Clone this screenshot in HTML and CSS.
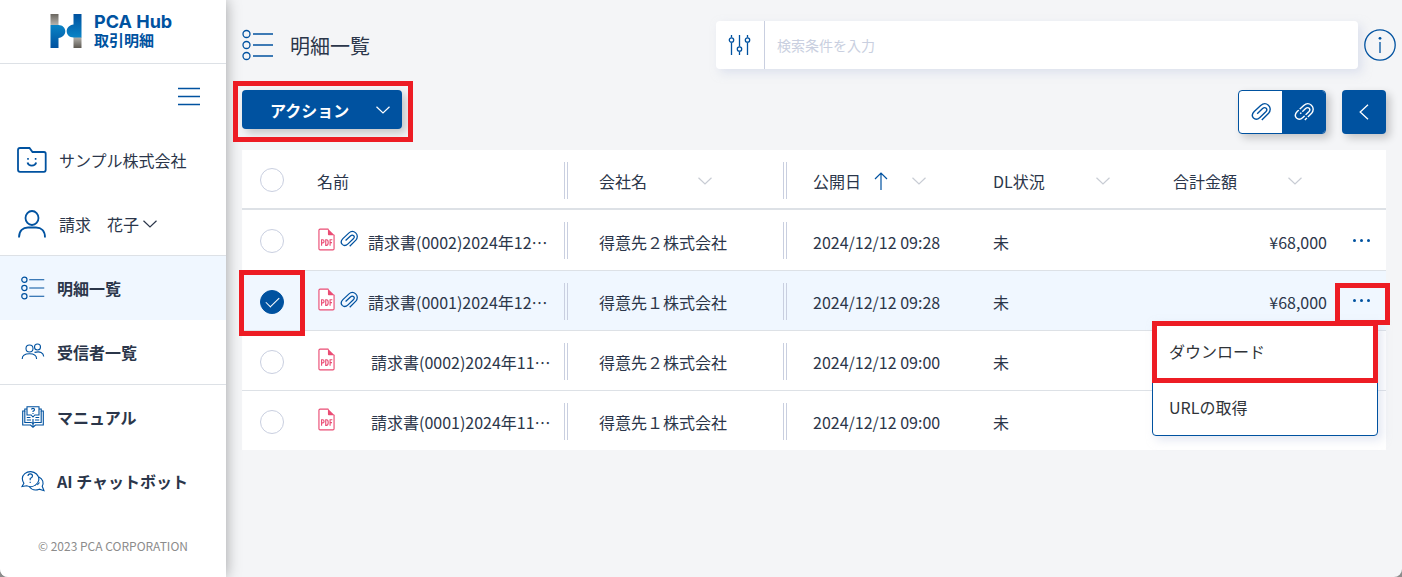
FILE: index.html
```html
<!DOCTYPE html>
<html lang="ja">
<head>
    <meta charset="UTF-8">
    <meta name="viewport" content="width=device-width, initial-scale=1.0">
    <title>明細一覧</title>
    <link rel="stylesheet" href="styles.css">
</head>
<body>
    <!-- Shared icons -->
    <svg class="sprite" width="0" height="0">
        <symbol id="icon-chevron" viewBox="0 0 14 8"><path d="M0.5 0.8L7 7L13.5 0.8"/></symbol>
        <symbol id="icon-list" viewBox="0 0 32 32">
            <circle cx="4.5" cy="5" r="3.5"/><circle cx="4.5" cy="16" r="3.5"/><circle cx="4.5" cy="27" r="3.5"/>
            <path d="M11 5h20M11 16h20M11 27h20"/>
        </symbol>
        <symbol id="icon-clip" viewBox="0 0 20 20">
            <path d="M10.8 18L17.6 11.2C19.8 8.8 19.7 5.2 17.4 3.2C15.1 1.2 12 1.4 9.7 3.5L3.2 9.6C1.2 11.6 0.8 14.2 2.5 16C4.3 17.7 6.9 17.3 8.9 15.4L14.8 9.8C16 8.5 16.1 7.2 15.2 6.3C14.2 5.4 12.8 5.5 11.6 6.6L6.2 11.7"/>
        </symbol>
        <symbol id="icon-pdf" viewBox="0 0 18 24">
            <path d="M11 1H2.2Q1 1 1 2.2V21.8Q1 23 2.2 23H15.8Q17 23 17 21.8V7" fill="#fff"/>
            <path d="M10.5 0.5L17.5 7.5H11.5Q10.5 7.5 10.5 6.5Z" fill="#ea4c74" stroke="none"/>
            <path d="M3.8 18.5V12.3H5Q6.4 12.3 6.4 14Q6.4 15.6 5 15.6H3.8M8.2 12.3V18.2H9Q10.8 18.2 10.8 15.2Q10.8 12.3 9 12.3ZM12.8 18.5V12.3H15.2M12.8 15.3H14.8"/>
        </symbol>
    </svg>

    <div class="app">
        <aside class="sidebar">
            <div class="brand">
                <svg width="32" height="34" viewBox="0 0 32 34">
                    <defs>
                        <linearGradient id="gray" x1="0" y1="0" x2="0" y2="1"><stop offset="0" stop-color="#6a665f"/><stop offset="1" stop-color="#b5b3ae"/></linearGradient>
                        <linearGradient id="gray2" x1="0" y1="1" x2="0" y2="0"><stop offset="0" stop-color="#5d5952"/><stop offset="1" stop-color="#b5b3ae"/></linearGradient>
                        <linearGradient id="blue" x1="0" y1="0" x2="0" y2="1"><stop offset="0" stop-color="#0a84c6"/><stop offset="1" stop-color="#00519f"/></linearGradient>
                        <linearGradient id="blue2" x1="0" y1="1" x2="0" y2="0"><stop offset="0" stop-color="#0a84c6"/><stop offset="1" stop-color="#00519f"/></linearGradient>
                    </defs>
                    <path d="M0.5 0h8v11h-8z" fill="url(#gray)"/>
                    <path d="M23.5 23h8v11h-8z" fill="url(#gray2)"/>
                    <path d="M0.5 11H8.5C12.5 11 15.3 14 15.3 17.3C15.3 20.8 12.5 23.5 8.5 24V34H0.5Z" fill="url(#blue)"/>
                    <path d="M31.5 23.5H23.5C19.5 23.5 16.7 20.8 16.7 17.3C16.7 13.8 19.5 11 23.5 10.5V0H31.5Z" fill="url(#blue2)"/>
                </svg>
                <div class="brand-text">
                    <span class="brand-name">PCA Hub</span>
                    <span class="brand-sub">取引明細</span>
                </div>
            </div>

            <div class="menu-toggle">
                <button type="button" class="icon-button" aria-label="メニュー">
                    <svg class="line-icon" width="22" height="20" viewBox="0 0 22 20"><path d="M0 2.5h22M0 10.5h22M0 18.5h22"/></svg>
                </button>
            </div>

            <div class="account">
                <svg class="line-icon bold" width="30" height="26" viewBox="0 0 30 26">
                    <path d="M3 1H12.5L15.5 5H27Q28.7 5 28.7 6.7V22.8Q28.7 24.8 27 24.8H3Q1 24.8 1 22.8V3Q1 1 3 1Z"/>
                    <path d="M10.5 15.5Q11.5 18.7 14.8 18.7Q18.2 18.7 19.2 15.5"/>
                    <path d="M10.2 11.8h1.6M17.8 11.8h1.6"/>
                </svg>
                <span>サンプル株式会社</span>
            </div>
            <button type="button" class="account account-user">
                <svg class="line-icon bold" width="30" height="28" viewBox="0 0 30 28">
                    <ellipse cx="15" cy="8" rx="6.5" ry="7"/>
                    <path d="M2 27.5C2 20.5 6 17.5 11 17.5H19C24 17.5 28 20.5 28 27.5"/>
                </svg>
                <span>請求　花子</span>
                <svg class="chevron dark" width="14" height="8"><use href="#icon-chevron"/></svg>
            </button>

            <nav class="nav">
                <a href="#" class="nav-item active">
                    <svg class="line-icon list-small" width="24" height="24"><use href="#icon-list"/></svg>
                    <span>明細一覧</span>
                </a>
                <a href="#" class="nav-item">
                    <svg class="line-icon thin" width="24" height="24" viewBox="0 0 24 24">
                        <circle cx="8.5" cy="8.5" r="3.5"/><circle cx="16.5" cy="7" r="3"/>
                        <path d="M1.2 19C1.2 15 4 13.8 8.5 13.8C13 13.8 15.6 15 15.6 19"/>
                        <path d="M13.5 12.4C19 11 22.5 12.5 22.7 16.5"/>
                    </svg>
                    <span>受信者一覧</span>
                </a>
            </nav>
            <nav class="nav">
                <a href="#" class="nav-item">
                    <svg class="line-icon thin" width="24" height="24" viewBox="0 0 24 24">
                        <path d="M6 1.7H18V10H13.8L12 12L10.2 10H6Z"/>
                        <path d="M6 4H3.8V6H1.7V20H9.5L12 22.2L14.5 20H22.3V6H20.2V4H18"/>
                        <path d="M3.8 6V17.5H9.5Q12 17.5 12 19.5Q12 17.5 14.5 17.5H20.2V6M12 14V22"/>
                        <path d="M5.8 12.5H9.5M5.8 15H10M14.5 12.5H18.2M14 15H18.2"/>
                        <path d="M10.5 4.6Q10.5 3.4 12 3.4Q13.5 3.4 13.5 4.7Q13.5 5.7 12 6.2V7M12 8V9"/>
                    </svg>
                    <span>マニュアル</span>
                </a>
                <a href="#" class="nav-item">
                    <svg class="line-icon thin" width="24" height="24" viewBox="0 0 24 24">
                        <path d="M1 17.5L2.9 14.2C0.8 10.8 1 7 3.8 4.6C7.3 1.7 12.5 2 15.5 5C18 7.5 18.4 11 16.7 13.8C14.3 17.3 9.8 18.5 5.6 16.8Z"/>
                        <path d="M18 8C22 10 23 14 21.2 17.3L23 21.7L18.3 20.2C14.5 21.7 10.5 20.7 8.4 17.8"/>
                        <path d="M7 7Q7 4.9 9.2 4.9Q11.5 4.9 11.5 7Q11.5 8.5 9.2 9.4V11.3M9.2 12.8V14"/>
                        <path d="M13.5 16.5H14.5M16.3 16L18.5 13.5"/>
                    </svg>
                    <span>AI チャットボット</span>
                </a>
            </nav>
            <footer class="copyright">© 2023 PCA CORPORATION</footer>
        </aside>

        <main class="main">
            <header class="page-header">
                <svg class="line-icon" width="32" height="32"><use href="#icon-list"/></svg>
                <h1>明細一覧</h1>
                <div class="search">
                    <button type="button" class="search-filter" aria-label="絞り込み">
                        <svg class="line-icon" width="24" height="24" viewBox="0 0 24 24">
                            <path d="M3.5 2V4.5M3.5 9.5V22M11.5 2V13.5M11.5 18.5V22M19.5 2V4.5M19.5 9.5V22"/>
                            <circle cx="3.5" cy="7" r="2.2"/><circle cx="11.5" cy="16" r="2.2"/><circle cx="19.5" cy="7" r="2.2"/>
                        </svg>
                    </button>
                    <input type="text" placeholder="検索条件を入力" aria-label="検索条件">
                </div>
                <button type="button" class="icon-button" aria-label="情報">
                    <svg class="line-icon" width="32" height="32" viewBox="0 0 32 32">
                        <circle cx="16" cy="16" r="15.2"/><path d="M16 13v11"/><circle class="fill" cx="16" cy="9.3" r="1.4"/>
                    </svg>
                </button>
            </header>

            <div class="toolbar">
                <div class="action-wrap">
                    <button type="button" class="action-button">
                        <span>アクション</span>
                        <svg class="chevron" width="14" height="8"><use href="#icon-chevron"/></svg>
                    </button>
                    <i class="marker marker-action"></i>
                </div>
                <div class="clip-toggle">
                    <button type="button" aria-label="添付あり"><svg class="clip" width="20" height="20"><use href="#icon-clip"/></svg></button>
                    <button type="button" class="on" aria-label="添付なし"><svg class="clip" width="20" height="20" viewBox="0 0 20 20"><use href="#icon-clip"/><path d="M2.5 5L15 17" class="slash"/></svg></button>
                </div>
                <button type="button" class="back-button" aria-label="戻る">
                    <svg width="10" height="16" viewBox="0 0 10 16"><path d="M9 0.8L1.2 8L9 15.2"/></svg>
                </button>
            </div>

            <table class="list">
                <colgroup>
                    <col class="col-check"><col><col class="col-company"><col class="col-date"><col class="col-status"><col class="col-amount"><col class="col-menu">
                </colgroup>
                <thead>
                    <tr>
                        <th class="check"><input type="checkbox" aria-label="すべて選択"></th>
                        <th class="name grip">名前</th>
                        <th class="company grip"><div class="head">会社名<svg class="chevron" width="14" height="8"><use href="#icon-chevron"/></svg></div></th>
                        <th class="date"><div class="head">公開日<svg class="sort" width="14" height="20" viewBox="0 0 14 20"><path d="M7 19V2M1 8L7 2L13 8"/></svg><svg class="chevron" width="14" height="8"><use href="#icon-chevron"/></svg></div></th>
                        <th><div class="head head-status">DL状況<svg class="chevron" width="14" height="8"><use href="#icon-chevron"/></svg></div></th>
                        <th><div class="head head-amount">合計金額<svg class="chevron" width="14" height="8"><use href="#icon-chevron"/></svg></div></th>
                        <th></th>
                    </tr>
                </thead>
                <tbody>
                    <tr>
                        <td class="check"><input type="checkbox" aria-label="選択"></td>
                        <td class="name grip"><div class="file"><svg class="pdf" width="17" height="23"><use href="#icon-pdf"/></svg><svg class="clip" width="18" height="18"><use href="#icon-clip"/></svg><span>請求書(0002)2024年12…</span></div></td>
                        <td class="company grip">得意先２株式会社</td>
                        <td class="date">2024/12/12 09:28</td>
                        <td>未</td>
                        <td class="amount">¥68,000</td>
                        <td class="menu-cell"><button type="button" class="more" aria-label="操作"><i></i><i></i><i></i></button></td>
                    </tr>
                    <tr class="selected">
                        <td class="check"><input type="checkbox" checked aria-label="選択"><i class="marker marker-check"></i></td>
                        <td class="name grip"><div class="file"><svg class="pdf" width="17" height="23"><use href="#icon-pdf"/></svg><svg class="clip" width="18" height="18"><use href="#icon-clip"/></svg><span>請求書(0001)2024年12…</span></div></td>
                        <td class="company grip">得意先１株式会社</td>
                        <td class="date">2024/12/12 09:28</td>
                        <td>未</td>
                        <td class="amount">¥68,000</td>
                        <td class="menu-cell">
                            <button type="button" class="more" aria-label="操作"><i></i><i></i><i></i></button>
                            <div class="dropdown">
                                <button type="button">ダウンロード</button>
                                <button type="button">URLの取得</button>
                                <i class="marker marker-download"></i>
                            </div>
                            <i class="marker marker-more"></i>
                        </td>
                    </tr>
                    <tr>
                        <td class="check"><input type="checkbox" aria-label="選択"></td>
                        <td class="name grip"><div class="file no-clip"><svg class="pdf" width="17" height="23"><use href="#icon-pdf"/></svg><span>請求書(0002)2024年11…</span></div></td>
                        <td class="company grip">得意先２株式会社</td>
                        <td class="date">2024/12/12 09:00</td>
                        <td>未</td>
                        <td></td>
                        <td></td>
                    </tr>
                    <tr>
                        <td class="check"><input type="checkbox" aria-label="選択"></td>
                        <td class="name grip"><div class="file no-clip"><svg class="pdf" width="17" height="23"><use href="#icon-pdf"/></svg><span>請求書(0001)2024年11…</span></div></td>
                        <td class="company grip">得意先１株式会社</td>
                        <td class="date">2024/12/12 09:00</td>
                        <td>未</td>
                        <td></td>
                        <td></td>
                    </tr>
                </tbody>
            </table>
        </main>
    </div>
</body>
</html>
```
FILE: styles.css
```css
*, *::before, *::after {
    box-sizing: border-box;
}
html {
    background: #8c8c8c;
}
body {
    margin: 0;
    font-family: "Noto Sans CJK JP", sans-serif;
    font-size: 16px;
    line-height: 24px;
    color: #2b364a;
}
button, input {
    font: inherit;
    color: inherit;
}
button {
    padding: 0;
    border: none;
    background: none;
    cursor: pointer;
}
svg {
    display: block;
    flex: none;
    fill: none;
}
.sprite {
    position: absolute;
}
.app {
    display: flex;
    min-height: 100vh;
    background: #f4f5f7;
    border-radius: 0 0 8px 8px;
    overflow: hidden;
}

/* Icons */
.line-icon {
    stroke: #0052a0;
    stroke-width: 1.3;
}
.line-icon.bold {
    stroke-width: 1.8;
}
.line-icon.thin {
    stroke-width: 1.1;
}
.line-icon.list-small {
    stroke-width: 1.6;
}
.line-icon .fill {
    fill: #0052a0;
    stroke: none;
}
.chevron {
    stroke: #c8ccd4;
    stroke-width: 1.2;
}
.chevron.dark {
    stroke: #2b364a;
}
.clip {
    stroke: #0052a0;
    stroke-width: 1.4;
}
.pdf {
    stroke: #ea4c74;
    stroke-width: 1.2;
}
.icon-button {
    display: block;
}

/* Sidebar */
.sidebar {
    position: relative;
    flex: none;
    width: 226px;
    background: #fff;
    box-shadow: 0 0 14px rgba(0, 0, 0, 0.35);
}
.brand {
    display: flex;
    align-items: center;
    gap: 12px;
    height: 64px;
    padding: 0 0 2px 50px;
    border-bottom: 1px solid #dde1e6;
    color: #0052a0;
}
.brand-text {
    display: flex;
    flex-direction: column;
}
.brand-name {
    font-family: Inter, sans-serif;
    font-size: 18px;
    font-weight: 700;
    line-height: 18px;
}
.brand-sub {
    font-size: 15px;
    font-weight: 700;
    line-height: 18px;
}
.menu-toggle {
    display: flex;
    justify-content: flex-end;
    align-items: center;
    height: 64px;
    padding-right: 26px;
}
.account {
    display: flex;
    align-items: center;
    gap: 12px;
    width: 100%;
    height: 64px;
    padding-left: 17px;
}
.account-user {
    border-bottom: 1px solid #dde1e6;
}
.account-user .chevron {
    margin-left: -8px;
}
.nav + .nav {
    border-top: 1px solid #dde1e6;
}
.nav-item {
    display: flex;
    align-items: center;
    gap: 12px;
    height: 64px;
    padding-left: 21px;
    font-weight: 700;
    color: inherit;
    text-decoration: none;
}
.nav-item.active {
    background: #f0f7ff;
}
.copyright {
    padding-top: 21px;
    font-size: 12px;
    text-align: center;
    color: #8c8c8c;
}

/* Header */
.main {
    flex: 1;
    min-width: 0;
    padding: 21px 16px 16px;
}
.page-header {
    display: flex;
    align-items: center;
    gap: 6px;
    height: 48px;
    margin-right: -10px;
}
h1 {
    margin: 0 0 0 10px;
    padding-top: 2px;
    font-size: 20px;
    font-weight: 400;
    white-space: nowrap;
}
.search {
    display: flex;
    flex: 0 1 642px;
    height: 48px;
    margin-left: auto;
    background: #fff;
    border-radius: 4px;
    box-shadow: 4px 4px 10px rgba(200, 207, 230, 0.5);
}
.search-filter {
    display: flex;
    justify-content: center;
    align-items: center;
    width: 49px;
    border-right: 1px solid #c9cfe0;
}
.search input {
    flex: 1;
    min-width: 0;
    padding: 0 12px;
    border: none;
    background: none;
    font-size: 14px;
}
.search input::placeholder {
    color: #c9cfe0;
}

/* Toolbar */
.toolbar {
    display: flex;
    align-items: flex-start;
    gap: 16px;
    margin: 21px 0 16px;
}
.action-wrap {
    position: relative;
    margin-right: auto;
}
.action-button {
    display: flex;
    justify-content: space-between;
    align-items: center;
    width: 160px;
    height: 39px;
    padding: 0 12px 0 28px;
    border-radius: 4px;
    background: #0052a0;
    color: #fff;
    font-weight: 700;
    box-shadow: 4px 4px 8px rgba(0, 0, 0, 0.2);
}
.action-button .chevron {
    stroke: #fff;
}
.clip-toggle {
    display: flex;
    border: 1px solid #0052a0;
    border-radius: 4px;
    background: #fff;
    overflow: hidden;
    box-shadow: 4px 4px 8px rgba(0, 0, 0, 0.2);
}
.clip-toggle button {
    display: flex;
    justify-content: center;
    align-items: center;
    width: 43px;
    height: 42px;
}
.clip-toggle .on {
    background: #0052a0;
}
.clip-toggle .on .clip {
    stroke: #fff;
}
.clip-toggle .slash {
    stroke: #0052a0;
    stroke-width: 1.4;
}
.back-button {
    display: flex;
    justify-content: center;
    align-items: center;
    width: 44px;
    height: 44px;
    border-radius: 4px;
    background: #0052a0;
    stroke: #fff;
    stroke-width: 1.3;
    box-shadow: 4px 4px 8px rgba(0, 0, 0, 0.2);
}

/* List */
.list {
    width: 100%;
    table-layout: fixed;
    border-spacing: 0;
    background: #fff;
}
.col-check { width: 60px; }
.col-company { width: 219px; }
.col-date { width: 193px; }
.col-status { width: 180px; }
.col-amount { width: 184px; }
.col-menu { width: 44px; }
th, td {
    position: relative;
    height: 60px;
    padding: 3px 15px 0;
    border-bottom: 1px solid #dde1e6;
    font-weight: 400;
    text-align: left;
    white-space: nowrap;
}
th {
    border-bottom-width: 2px;
}
tbody tr:first-child td {
    height: 61px;
}
tbody tr:last-child td {
    height: 59px;
    border-bottom: none;
}
.selected {
    background: #f0f7ff;
}
.check {
    padding: 2px 18px 0;
}
.company {
    padding-left: 33px;
}
.date {
    padding-left: 28px;
}
.amount {
    text-align: right;
}
/* Column resize handle */
.grip::after {
    content: "";
    position: absolute;
    top: 12px;
    right: -2px;
    width: 4px;
    height: 37px;
    border: solid #c9cfe0;
    border-width: 0 1px;
}
.head {
    display: flex;
    align-items: center;
    width: 113px;
}
.head .chevron {
    margin-left: auto;
}
.head-status {
    width: 117px;
}
.head-amount {
    width: 129px;
}
.sort {
    margin-left: 13px;
    stroke: #0052a0;
    stroke-width: 1.2;
}
.file {
    display: flex;
    align-items: center;
    gap: 5px;
    padding-left: 1px;
}
.file .clip {
    margin-right: 5px;
}
.file.no-clip {
    gap: 36px;
}
.file svg {
    margin-bottom: 5px;
}
.menu-cell {
    padding: 0;
}
.more {
    display: flex;
    justify-content: center;
    gap: 4px;
    width: 38px;
    padding: 8px 0;
}
.more i {
    width: 3px;
    height: 3px;
    border-radius: 50%;
    background: #0052a0;
}
input[type="checkbox"] {
    display: block;
    appearance: none;
    width: 24px;
    height: 24px;
    margin: 0;
    border: 1px solid #c9cfe0;
    border-radius: 50%;
    background: #fff;
}
input[type="checkbox"]:checked {
    border-color: #0052a0;
    background: #0052a0;
}
input[type="checkbox"]:checked::after {
    content: "";
    display: block;
    width: 13px;
    height: 7px;
    margin: 6px 5px;
    border: solid #fff;
    border-width: 0 0 1px 1px;
    transform: rotate(-45deg);
}
.dropdown {
    position: absolute;
    top: 50px;
    right: 8px;
    z-index: 1;
    width: 226px;
    padding-bottom: 1px;
    border: 1px solid #0052a0;
    border-radius: 4px;
    background: #fff;
    box-shadow: 4px 4px 10px rgba(200, 207, 230, 0.5);
}
.dropdown button {
    display: block;
    width: 100%;
    height: 56px;
    padding: 2px 0 0 16px;
    text-align: left;
    color: #2f3338;
}

/* Red highlight frames */
.marker {
    position: absolute;
    z-index: 2;
    border: 5px solid #ed1c24;
    pointer-events: none;
}
.marker-action {
    inset: -9px -11px -13px -9px;
}
.marker-check {
    inset: -1px -3px -6px -3px;
}
.marker-more {
    inset: 12px -4px 5px -7px;
}
.marker-download {
    top: -1px;
    left: -1px;
    right: -1px;
    height: 62px;
}
```
